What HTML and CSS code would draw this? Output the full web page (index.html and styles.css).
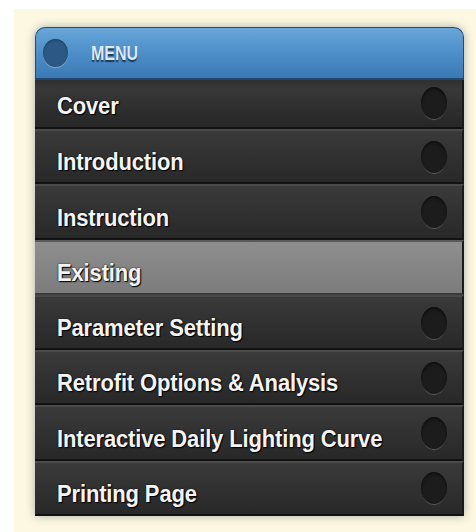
FILE: index.html
```html
<!DOCTYPE html>
<html lang="en">
<head>
<meta charset="utf-8">
<title>Menu</title>
<link rel="stylesheet" href="styles.css">
</head>
<body>
<div class="page">
  <nav class="menu">
    <div class="menu-head">
      <span class="head-dot"></span>
      <span class="head-title">MENU</span>
    </div>
    <ul class="menu-list">
      <li class="menu-item menu-item--first"><span class="label">Cover</span><span class="dot"></span></li>
      <li class="menu-item"><span class="label">Introduction</span><span class="dot"></span></li>
      <li class="menu-item"><span class="label">Instruction</span><span class="dot"></span></li>
      <li class="menu-item menu-item--active"><span class="label">Existing</span></li>
      <li class="menu-item"><span class="label">Parameter Setting</span><span class="dot"></span></li>
      <li class="menu-item"><span class="label">Retrofit Options &amp; Analysis</span><span class="dot"></span></li>
      <li class="menu-item"><span class="label">Interactive Daily Lighting Curve</span><span class="dot"></span></li>
      <li class="menu-item"><span class="label">Printing Page</span><span class="dot"></span></li>
    </ul>
  </nav>
</div>
</body>
</html>
```

FILE: styles.css
```css
html, body {
  margin: 0;
  padding: 0;
  background: #ffffff;
}

.page {
  margin: 9px 0 0 14px;
  min-height: 523px;
  box-sizing: border-box;
  padding: 18px 0 0 21px;
  background: #fdf8e1;
  font-family: "Liberation Sans", Arial, sans-serif;
}

.menu {
  width: 429px;
  box-shadow: 0 0 10px rgba(40, 60, 80, 0.4);
  border-radius: 10px 10px 0 0;
}

/* blue title bar */
.menu-head {
  height: 53px;
  box-sizing: border-box;
  display: flex;
  align-items: center;
  padding-left: 7px;
  border: 1px solid #1f4c7a;
  border-bottom: 2px solid #1d4670;
  border-radius: 10px 10px 0 0;
  background: linear-gradient(#6aa6d8 0%, #5395cd 35%, #3a79b6 100%);
}

.head-dot {
  width: 25px;
  height: 28px;
  border-radius: 50%;
  background: #2c5885;
  box-shadow: 0 1px 1px #84aad0, inset 0 1px 2px rgba(0, 0, 0, 0.35);
}

.head-title {
  display: inline-block;
  margin-left: 23px;
  padding-top: 2px;
  font-size: 16px;
  font-weight: bold;
  color: #dde9f6;
  text-shadow: 0 1px 1px rgba(0, 0, 0, 0.6);
  transform: scaleY(1.22);
}

.menu-list {
  list-style: none;
  margin: 0;
  padding: 0;
}

.menu-item {
  height: 55.3px;
  box-sizing: border-box;
  display: flex;
  align-items: flex-end;
  padding: 0 15px 7px 22px;
  border-top: 2px solid #4a4a4a;
  border-bottom: 2px solid #121212;
  border-right: 2px solid #1a1a1a;
  background: linear-gradient(#3a3a3a, #282828);
}

.menu-item--first {
  height: 49px;
  border-top: none;
  padding-bottom: 8px;
  background: linear-gradient(#303030 0%, #383838 20%, #262626 100%);
}

.menu-item--active {
  background: linear-gradient(#8e8e8e, #7c7c7c);
  border-top-color: #5a5a5a;
  border-bottom-color: #3c3c3c;
}

.label {
  flex: 1;
  font-size: 22px;
  line-height: 24px;
  letter-spacing: -0.15px;
  font-weight: bold;
  color: #f4f4f4;
  text-shadow: 1px 1px 1px #000, 0 0 2px rgba(0, 0, 0, 0.8);
  transform: scaleY(1.08);
  transform-origin: 0 80%;
}

/* round indicator on the right of each row */
.dot {
  align-self: center;
  width: 26px;
  height: 32px;
  margin-bottom: -7px;
  border-radius: 50%;
  background: #1c1c1c;
  box-shadow: 0 2px 1px -1px #5e5e5e, inset 0 2px 3px rgba(0, 0, 0, 0.5);
}
```
